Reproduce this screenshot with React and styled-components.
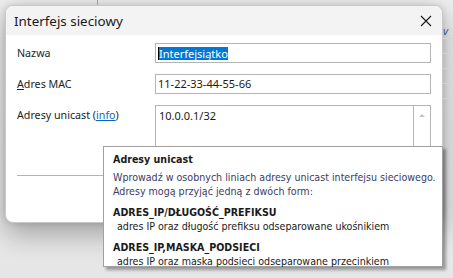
import React from "react";
import styled, { createGlobalStyle } from "styled-components";

const Global = createGlobalStyle`
  html, body { margin: 0; padding: 0; }
  body {
    width: 453px; height: 278px; overflow: hidden;
    background: linear-gradient(#eeeeee, #e6e6e6);
    font-family: "Noto Sans", "Open Sans", sans-serif;
  }
`;

const Desktop = styled.div`
  position: relative;
  width: 453px;
  height: 278px;
  padding: 5px 0 0 5px;
  box-sizing: border-box;
`;

const BgLine = styled.div`
  position: absolute;
  left: 97px; top: 0;
  width: 1px; height: 5px;
  background: #a0a0a0;
`;

const BgRows = styled.div`
  position: absolute;
  right: 0; top: 24px;
  width: 10px;
  display: flex;
  flex-direction: column;
`;

const BgRow = styled.div`
  height: 14px;
  border-bottom: 1px solid #d4d4d4;
  font-size: 11px;
  color: #3a5a9a;
  font-style: italic;
  line-height: 14px;
`;

const Dialog = styled.div`
  width: 438px;
  height: 218px;
  background: #ffffff;
  border: 1px solid #c9c9c9;
  border-radius: 8px;
  box-sizing: border-box;
  overflow: hidden;
  box-shadow: 0 10px 28px rgba(0,0,0,0.32), 0 0 6px rgba(0,0,0,0.12);
  display: flex;
  flex-direction: column;
`;

const TitleBar = styled.div`
  height: 29px;
  background: #f3f3f3;
  display: flex;
  align-items: center;
  justify-content: space-between;
  padding: 0 10px 0 8px;
  flex-shrink: 0;
`;

const Title = styled.span`
  font-size: 13.4px;
  color: #1a1a1a;
  padding-top: 1px;
`;

const CloseBtn = styled.span`
  display: flex;
  width: 12px; height: 12px;
`;

const Body = styled.div`
  padding: 8px 11px 0 11px;
  display: flex;
  flex-direction: column;
`;

const Row = styled.div`
  display: flex;
  align-items: flex-start;
  margin-bottom: ${p => p.$mb || 0}px;
`;

const Label = styled.div`
  width: 138px;
  flex-shrink: 0;
  font-size: 10.7px;
  color: #1e1e1e;
  line-height: 20px;
`;

const Link = styled.a`
  color: #0a64c8;
  text-decoration: underline;
`;

const U = styled.span`
  text-decoration: underline;
`;

const Input = styled.div`
  width: 276px;
  height: 20px;
  box-sizing: border-box;
  border: 1px solid #b4b4b4;
  font-size: 11px;
  line-height: 18px;
  padding: 0 2px;
  color: #1a1a1a;
  display: flex;
  align-items: center;
`;

const Selected = styled.span`
  background: #0078d7;
  color: #fff;
  line-height: 13px;
  border-left: 1px solid #000;
`;

const TextArea = styled.div`
  width: 276px;
  height: 62px;
  box-sizing: border-box;
  border: 1px solid #b4b4b4;
  display: flex;
`;

const TAContent = styled.div`
  flex: 1;
  font-size: 11px;
  color: #1a1a1a;
  padding: 1px 3px;
  line-height: 18px;
`;

const Scroll = styled.div`
  width: 17px;
  border-left: 1px solid #b4b4b4;
  display: flex;
  justify-content: center;
  padding-top: 8px;
  box-sizing: border-box;
`;

const Arrow = styled.div`
  width: 0; height: 0;
  border-left: 3px solid transparent;
  border-right: 3px solid transparent;
  border-bottom: 3px solid #c4c4c4;
`;

const Separator = styled.div`
  height: 1px;
  background: #b4b4b4;
  margin-top: 8px;
  width: 414px;
`;

const Tooltip = styled.div`
  position: absolute;
  left: 103px;
  top: 146px;
  width: 340px;
  height: 121px;
  box-sizing: border-box;
  background: #ffffff;
  border: 1px solid #a0a0a0;
  box-shadow: 3px 3px 3px rgba(0,0,0,0.35);
  padding: 5px 9px 0 9px;
  font-family: "DejaVu Sans Condensed", "DejaVu Sans", sans-serif;
  font-size: 10.6px;
  color: #1a1a1a;
  line-height: 14px;
  white-space: nowrap;
`;

const TipTitle = styled.div`
  font-weight: bold;
  margin-bottom: 4px;
`;

const TipPara = styled.div`
  color: #3c3c64;
  margin-bottom: 7px;
`;

const TipTerm = styled.div`
  font-weight: bold;
  margin-top: ${p => p.$mt || 0}px;
`;

const TipDesc = styled.div`
  padding-left: 4px;
  color: #1a1a1a;
`;

export default function App() {
  return (
    <>
      <Global />
      <Desktop>
        <BgLine />
        <BgRows>
          <BgRow>v</BgRow>
          <BgRow />
          <BgRow />
          <BgRow />
          <BgRow />
        </BgRows>
        <Dialog>
          <TitleBar>
            <Title>Interfejs sieciowy</Title>
            <CloseBtn>
              <svg width="12" height="12" viewBox="0 0 12 12">
                <path d="M1 1L11 11M11 1L1 11" stroke="#1a1a1a" strokeWidth="1.1" fill="none" />
              </svg>
            </CloseBtn>
          </TitleBar>
          <Body>
            <Row $mb={11}>
              <Label>Nazwa</Label>
              <Input><Selected>Interfejsiątko</Selected></Input>
            </Row>
            <Row $mb={11}>
              <Label><U>A</U>dres MAC</Label>
              <Input>11-22-33-44-55-66</Input>
            </Row>
            <Row>
              <Label>Adresy unicast (<Link>info</Link>)</Label>
              <TextArea>
                <TAContent>10.0.0.1/32</TAContent>
                <Scroll><Arrow /></Scroll>
              </TextArea>
            </Row>
            <Separator />
          </Body>
        </Dialog>
        <Tooltip>
          <TipTitle>Adresy unicast</TipTitle>
          <TipPara>
            Wprowadź w osobnych liniach adresy unicast interfejsu sieciowego.<br />
            Adresy mogą przyjąć jedną z dwóch form:
          </TipPara>
          <TipTerm>ADRES_IP/DŁUGOŚĆ_PREFIKSU</TipTerm>
          <TipDesc>adres IP oraz długość prefiksu odseparowane ukośnikiem</TipDesc>
          <TipTerm $mt={7}>ADRES_IP,MASKA_PODSIECI</TipTerm>
          <TipDesc>adres IP oraz maska podsieci odseparowane przecinkiem</TipDesc>
        </Tooltip>
      </Desktop>
    </>
  );
}
